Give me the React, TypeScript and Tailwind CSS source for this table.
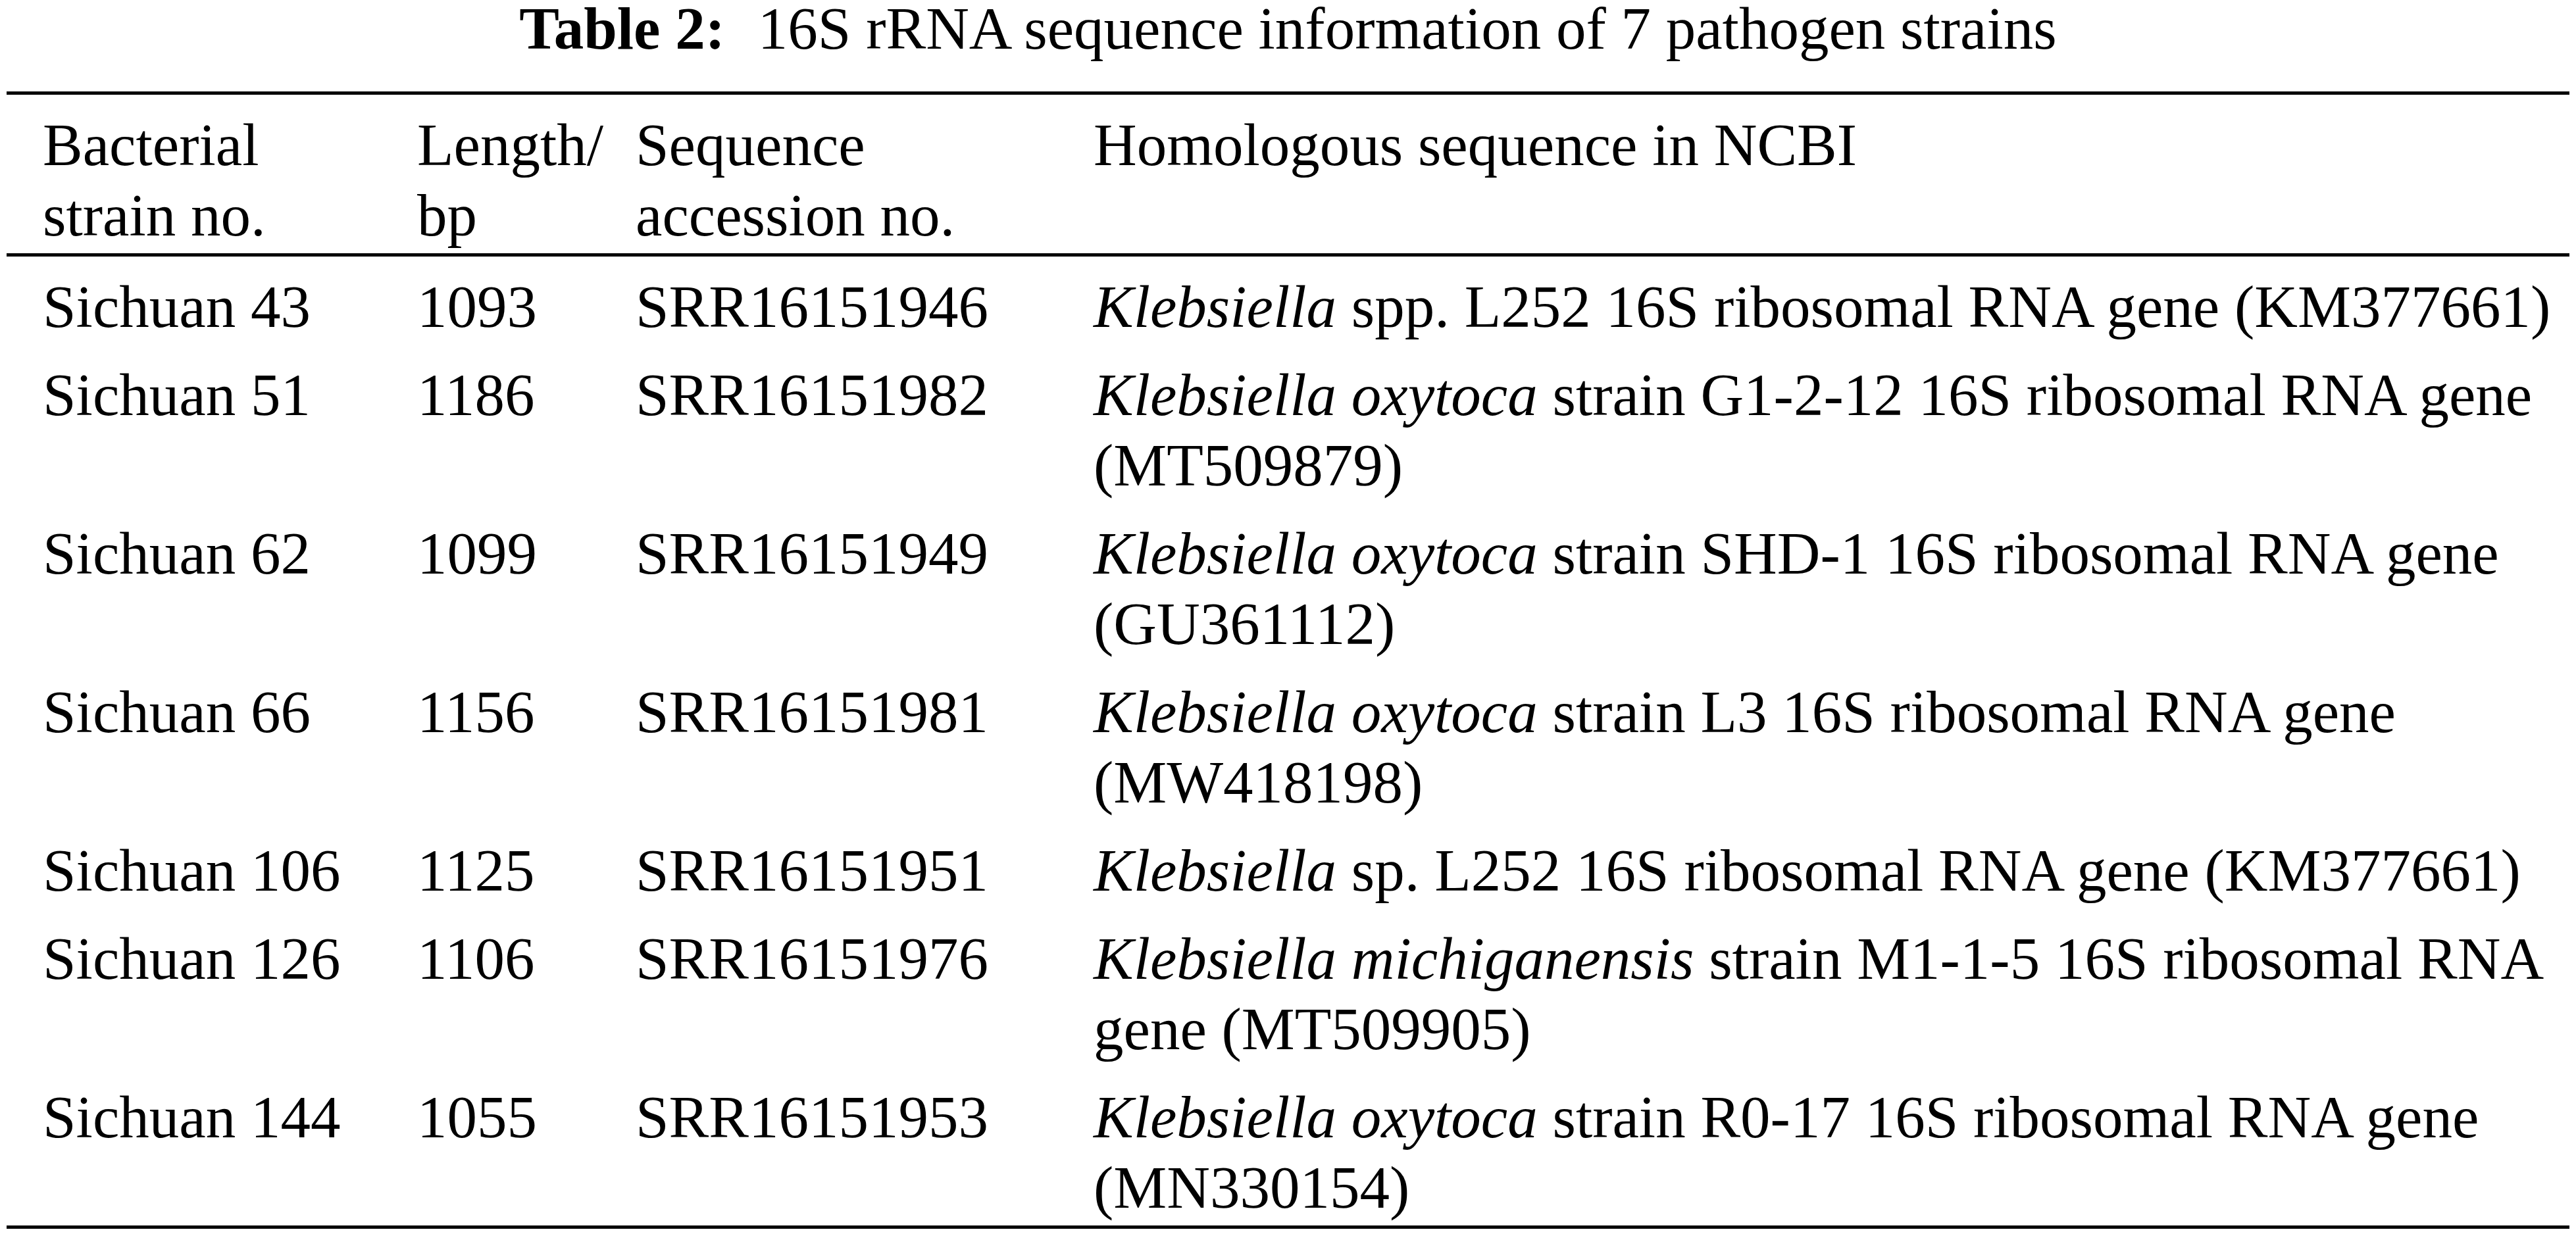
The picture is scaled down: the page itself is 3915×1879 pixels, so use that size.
const rows = [
  { strain: "Sichuan 43", len: "1093", acc: "SRR16151946", sp: "Klebsiella", rest: " spp. L252 16S ribosomal RNA gene (KM377661)", next: "" },
  { strain: "Sichuan 51", len: "1186", acc: "SRR16151982", sp: "Klebsiella oxytoca", rest: " strain G1-2-12 16S ribosomal RNA gene", next: "(MT509879)" },
  { strain: "Sichuan 62", len: "1099", acc: "SRR16151949", sp: "Klebsiella oxytoca", rest: " strain SHD-1 16S ribosomal RNA gene", next: "(GU361112)" },
  { strain: "Sichuan 66", len: "1156", acc: "SRR16151981", sp: "Klebsiella oxytoca", rest: " strain L3 16S ribosomal RNA gene", next: "(MW418198)" },
  { strain: "Sichuan 106", len: "1125", acc: "SRR16151951", sp: "Klebsiella", rest: " sp. L252 16S ribosomal RNA gene (KM377661)", next: "" },
  { strain: "Sichuan 126", len: "1106", acc: "SRR16151976", sp: "Klebsiella michiganensis", rest: " strain M1-1-5 16S ribosomal RNA", next: "gene (MT509905)" },
  { strain: "Sichuan 144", len: "1055", acc: "SRR16151953", sp: "Klebsiella oxytoca", rest: " strain R0-17 16S ribosomal RNA gene", next: "(MN330154)" },
];

const cols = "grid grid-cols-[569px_332px_696px_1fr] pl-[55px]";

export default function App() {
  return (
    <div className="min-h-screen bg-white font-['Liberation_Serif','Times_New_Roman',serif] text-[91px] text-black">
      <h1 className="text-center leading-[88px] font-normal">
        <span className="font-bold">Table 2:</span>{" "}
        <span className="ml-[27px]">16S rRNA sequence information of 7 pathogen strains</span>
      </h1>

      <div className="mx-[10px] mt-[51px] border-y-[5px] border-black leading-[107px]">
        {/* header */}
        <div className={`${cols} border-b-[5px] border-black pt-[23px] pb-[4px]`}>
          <div>
            <div>Bacterial</div>
            <div>strain no.</div>
          </div>
          <div>
            <div>Length/</div>
            <div>bp</div>
          </div>
          <div>
            <div>Sequence</div>
            <div>accession no.</div>
          </div>
          <div>Homologous sequence in NCBI</div>
        </div>

        {rows.map((r) => (
          <div key={r.strain} className={`${cols} pt-[23px] pb-[4px]`}>
            <div>{r.strain}</div>
            <div>{r.len}</div>
            <div>{r.acc}</div>
            <div>
              <div className="whitespace-nowrap">
                <span className="italic">{r.sp}</span>
                <span>{r.rest}</span>
              </div>
              {r.next && <div>{r.next}</div>}
            </div>
          </div>
        ))}
      </div>
    </div>
  );
}
